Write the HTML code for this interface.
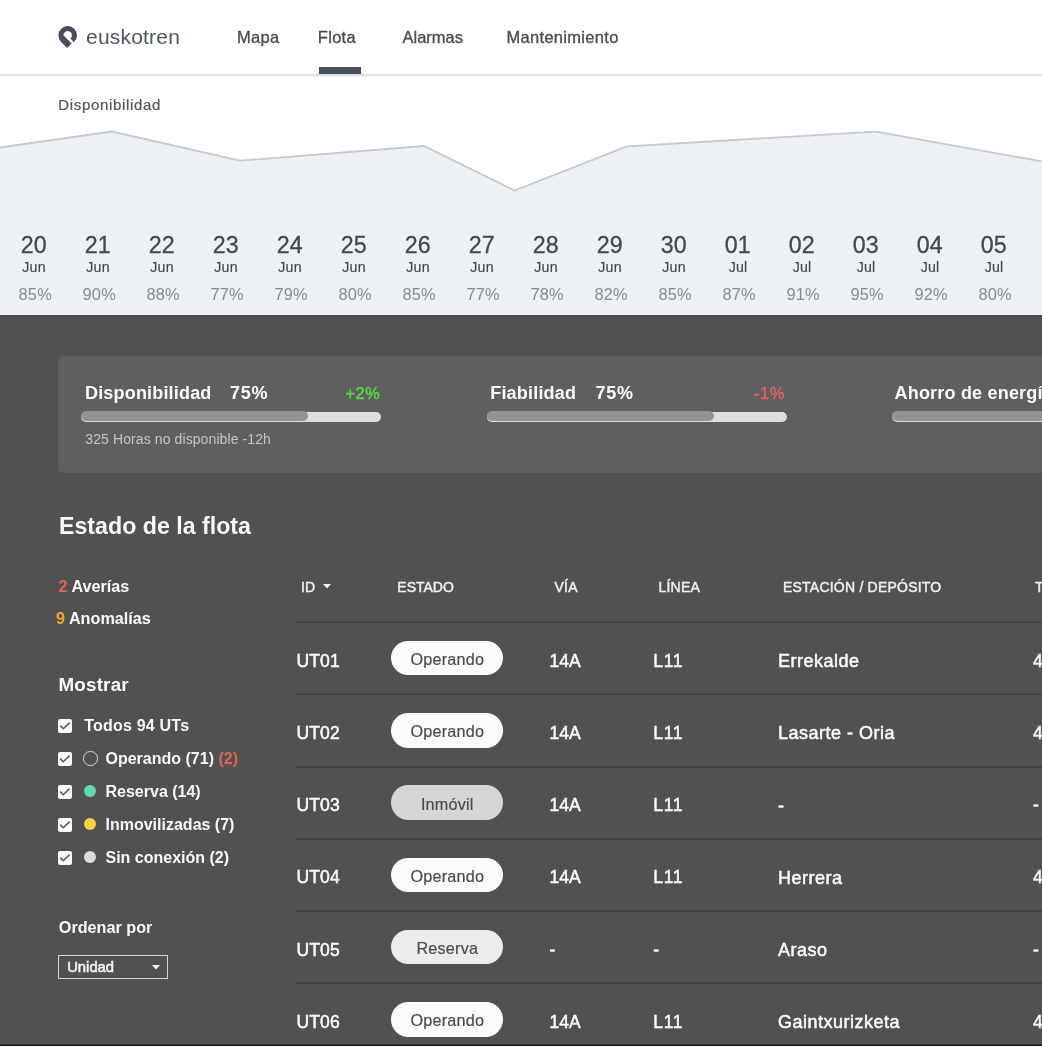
<!DOCTYPE html>
<html><head><meta charset="utf-8"><style>
html,body{margin:0;padding:0;width:1042px;height:1046px;overflow:hidden;background:#515151;}
body{position:relative;will-change:transform;font-family:"Liberation Sans",sans-serif;}
.t{position:absolute;white-space:nowrap;}
</style></head><body>
<div style="position:absolute;left:0;top:0;width:1042px;height:74px;background:#fff;"></div>
<div style="position:absolute;left:0;top:74px;width:1042px;height:3px;background:linear-gradient(#d6d8d8,#e6e8e8 55%,#fbfbfb);"></div>
<svg style="position:absolute;left:0;top:0" width="120" height="60" viewBox="0 0 120 60"><path d="M67.21 47.96 L61.12 41.88 A9.3 9.3 0 1 1 73.99 42.15 L70.44 38.61 A4.3 4.3 0 1 0 63.40 35.24 L71.66 43.50 Z" fill="#454e59"/></svg>
<div class="t" style="left:86px;top:26.20px;font-size:21px;line-height:21px;font-weight:400;color:#4d5660;letter-spacing:0.2px;">euskotren</div>

<div class="t" style="left:237px;top:28.60px;font-size:16.5px;line-height:16.5px;font-weight:400;color:#4a4a4a;letter-spacing:0.3px;-webkit-text-stroke:0.3px #4a4a4a;">Mapa</div>

<div class="t" style="left:317.8px;top:28.60px;font-size:16.5px;line-height:16.5px;font-weight:400;color:#4a4a4a;letter-spacing:0.3px;-webkit-text-stroke:0.3px #4a4a4a;">Flota</div>

<div class="t" style="left:402.5px;top:28.60px;font-size:16.5px;line-height:16.5px;font-weight:400;color:#4a4a4a;-webkit-text-stroke:0.3px #4a4a4a;">Alarmas</div>

<div class="t" style="left:506.5px;top:28.60px;font-size:16.5px;line-height:16.5px;font-weight:400;color:#4a4a4a;letter-spacing:0.3px;-webkit-text-stroke:0.3px #4a4a4a;">Mantenimiento</div>

<div style="position:absolute;left:319px;top:67px;width:42px;height:7px;background:#454e59;"></div>
<div style="position:absolute;left:0;top:77px;width:1042px;height:238px;background:#fff;"></div>
<svg style="position:absolute;left:0;top:0" width="1042" height="316" viewBox="0 0 1042 316">
<polygon points="0,147.5 112,131.5 240,160.7 424,146 514.5,190.5 627,146.3 876,131.7 1042,161.4 1042,316 0,316" fill="#ecf1f3"/>
<polyline points="0,147.5 112,131.5 240,160.7 424,146 514.5,190.5 627,146.3 876,131.7 1042,161.4" fill="none" stroke="#c6cacb" stroke-width="1.8"/>
</svg>
<div class="t" style="left:58.3px;top:97.00px;font-size:15px;line-height:15px;font-weight:400;color:#555555;letter-spacing:0.66px;-webkit-text-stroke:0.2px #555555;">Disponibilidad</div>

<div class="t" style="left:-66.19999999999999px;width:200px;text-align:center;top:234.10px;font-size:23.2px;line-height:23.2px;font-weight:400;color:#45484c;letter-spacing:0.15px;-webkit-text-stroke:0.3px #45484c;">20</div>

<div class="t" style="left:-66.0px;width:200px;text-align:center;top:259.70px;font-size:14.2px;line-height:14.2px;font-weight:400;color:#45484c;letter-spacing:0.2px;-webkit-text-stroke:0.15px #45484c;">Jun</div>

<div class="t" style="left:-64.8px;width:200px;text-align:center;top:285.60px;font-size:16.4px;line-height:16.4px;font-weight:400;color:#888a8c;letter-spacing:0.2px;">85%</div>

<div class="t" style="left:-2.200000000000003px;width:200px;text-align:center;top:234.10px;font-size:23.2px;line-height:23.2px;font-weight:400;color:#45484c;letter-spacing:0.15px;-webkit-text-stroke:0.3px #45484c;">21</div>

<div class="t" style="left:-2.0px;width:200px;text-align:center;top:259.70px;font-size:14.2px;line-height:14.2px;font-weight:400;color:#45484c;letter-spacing:0.2px;-webkit-text-stroke:0.15px #45484c;">Jun</div>

<div class="t" style="left:-0.7999999999999972px;width:200px;text-align:center;top:285.60px;font-size:16.4px;line-height:16.4px;font-weight:400;color:#888a8c;letter-spacing:0.2px;">90%</div>

<div class="t" style="left:61.79999999999998px;width:200px;text-align:center;top:234.10px;font-size:23.2px;line-height:23.2px;font-weight:400;color:#45484c;letter-spacing:0.15px;-webkit-text-stroke:0.3px #45484c;">22</div>

<div class="t" style="left:62.0px;width:200px;text-align:center;top:259.70px;font-size:14.2px;line-height:14.2px;font-weight:400;color:#45484c;letter-spacing:0.2px;-webkit-text-stroke:0.15px #45484c;">Jun</div>

<div class="t" style="left:63.19999999999999px;width:200px;text-align:center;top:285.60px;font-size:16.4px;line-height:16.4px;font-weight:400;color:#888a8c;letter-spacing:0.2px;">88%</div>

<div class="t" style="left:125.79999999999998px;width:200px;text-align:center;top:234.10px;font-size:23.2px;line-height:23.2px;font-weight:400;color:#45484c;letter-spacing:0.15px;-webkit-text-stroke:0.3px #45484c;">23</div>

<div class="t" style="left:126.0px;width:200px;text-align:center;top:259.70px;font-size:14.2px;line-height:14.2px;font-weight:400;color:#45484c;letter-spacing:0.2px;-webkit-text-stroke:0.15px #45484c;">Jun</div>

<div class="t" style="left:127.19999999999999px;width:200px;text-align:center;top:285.60px;font-size:16.4px;line-height:16.4px;font-weight:400;color:#888a8c;letter-spacing:0.2px;">77%</div>

<div class="t" style="left:189.8px;width:200px;text-align:center;top:234.10px;font-size:23.2px;line-height:23.2px;font-weight:400;color:#45484c;letter-spacing:0.15px;-webkit-text-stroke:0.3px #45484c;">24</div>

<div class="t" style="left:190.0px;width:200px;text-align:center;top:259.70px;font-size:14.2px;line-height:14.2px;font-weight:400;color:#45484c;letter-spacing:0.2px;-webkit-text-stroke:0.15px #45484c;">Jun</div>

<div class="t" style="left:191.2px;width:200px;text-align:center;top:285.60px;font-size:16.4px;line-height:16.4px;font-weight:400;color:#888a8c;letter-spacing:0.2px;">79%</div>

<div class="t" style="left:253.8px;width:200px;text-align:center;top:234.10px;font-size:23.2px;line-height:23.2px;font-weight:400;color:#45484c;letter-spacing:0.15px;-webkit-text-stroke:0.3px #45484c;">25</div>

<div class="t" style="left:254.0px;width:200px;text-align:center;top:259.70px;font-size:14.2px;line-height:14.2px;font-weight:400;color:#45484c;letter-spacing:0.2px;-webkit-text-stroke:0.15px #45484c;">Jun</div>

<div class="t" style="left:255.2px;width:200px;text-align:center;top:285.60px;font-size:16.4px;line-height:16.4px;font-weight:400;color:#888a8c;letter-spacing:0.2px;">80%</div>

<div class="t" style="left:317.8px;width:200px;text-align:center;top:234.10px;font-size:23.2px;line-height:23.2px;font-weight:400;color:#45484c;letter-spacing:0.15px;-webkit-text-stroke:0.3px #45484c;">26</div>

<div class="t" style="left:318.0px;width:200px;text-align:center;top:259.70px;font-size:14.2px;line-height:14.2px;font-weight:400;color:#45484c;letter-spacing:0.2px;-webkit-text-stroke:0.15px #45484c;">Jun</div>

<div class="t" style="left:319.2px;width:200px;text-align:center;top:285.60px;font-size:16.4px;line-height:16.4px;font-weight:400;color:#888a8c;letter-spacing:0.2px;">85%</div>

<div class="t" style="left:381.8px;width:200px;text-align:center;top:234.10px;font-size:23.2px;line-height:23.2px;font-weight:400;color:#45484c;letter-spacing:0.15px;-webkit-text-stroke:0.3px #45484c;">27</div>

<div class="t" style="left:382.0px;width:200px;text-align:center;top:259.70px;font-size:14.2px;line-height:14.2px;font-weight:400;color:#45484c;letter-spacing:0.2px;-webkit-text-stroke:0.15px #45484c;">Jun</div>

<div class="t" style="left:383.2px;width:200px;text-align:center;top:285.60px;font-size:16.4px;line-height:16.4px;font-weight:400;color:#888a8c;letter-spacing:0.2px;">77%</div>

<div class="t" style="left:445.80000000000007px;width:200px;text-align:center;top:234.10px;font-size:23.2px;line-height:23.2px;font-weight:400;color:#45484c;letter-spacing:0.15px;-webkit-text-stroke:0.3px #45484c;">28</div>

<div class="t" style="left:446.0px;width:200px;text-align:center;top:259.70px;font-size:14.2px;line-height:14.2px;font-weight:400;color:#45484c;letter-spacing:0.2px;-webkit-text-stroke:0.15px #45484c;">Jun</div>

<div class="t" style="left:447.20000000000005px;width:200px;text-align:center;top:285.60px;font-size:16.4px;line-height:16.4px;font-weight:400;color:#888a8c;letter-spacing:0.2px;">78%</div>

<div class="t" style="left:509.80000000000007px;width:200px;text-align:center;top:234.10px;font-size:23.2px;line-height:23.2px;font-weight:400;color:#45484c;letter-spacing:0.15px;-webkit-text-stroke:0.3px #45484c;">29</div>

<div class="t" style="left:510.0px;width:200px;text-align:center;top:259.70px;font-size:14.2px;line-height:14.2px;font-weight:400;color:#45484c;letter-spacing:0.2px;-webkit-text-stroke:0.15px #45484c;">Jun</div>

<div class="t" style="left:511.20000000000005px;width:200px;text-align:center;top:285.60px;font-size:16.4px;line-height:16.4px;font-weight:400;color:#888a8c;letter-spacing:0.2px;">82%</div>

<div class="t" style="left:573.8000000000001px;width:200px;text-align:center;top:234.10px;font-size:23.2px;line-height:23.2px;font-weight:400;color:#45484c;letter-spacing:0.15px;-webkit-text-stroke:0.3px #45484c;">30</div>

<div class="t" style="left:574.0px;width:200px;text-align:center;top:259.70px;font-size:14.2px;line-height:14.2px;font-weight:400;color:#45484c;letter-spacing:0.2px;-webkit-text-stroke:0.15px #45484c;">Jun</div>

<div class="t" style="left:575.2px;width:200px;text-align:center;top:285.60px;font-size:16.4px;line-height:16.4px;font-weight:400;color:#888a8c;letter-spacing:0.2px;">85%</div>

<div class="t" style="left:637.8000000000001px;width:200px;text-align:center;top:234.10px;font-size:23.2px;line-height:23.2px;font-weight:400;color:#45484c;letter-spacing:0.15px;-webkit-text-stroke:0.3px #45484c;">01</div>

<div class="t" style="left:638.0px;width:200px;text-align:center;top:259.70px;font-size:14.2px;line-height:14.2px;font-weight:400;color:#45484c;letter-spacing:0.2px;-webkit-text-stroke:0.15px #45484c;">Jul</div>

<div class="t" style="left:639.2px;width:200px;text-align:center;top:285.60px;font-size:16.4px;line-height:16.4px;font-weight:400;color:#888a8c;letter-spacing:0.2px;">87%</div>

<div class="t" style="left:701.8000000000001px;width:200px;text-align:center;top:234.10px;font-size:23.2px;line-height:23.2px;font-weight:400;color:#45484c;letter-spacing:0.15px;-webkit-text-stroke:0.3px #45484c;">02</div>

<div class="t" style="left:702.0px;width:200px;text-align:center;top:259.70px;font-size:14.2px;line-height:14.2px;font-weight:400;color:#45484c;letter-spacing:0.2px;-webkit-text-stroke:0.15px #45484c;">Jul</div>

<div class="t" style="left:703.2px;width:200px;text-align:center;top:285.60px;font-size:16.4px;line-height:16.4px;font-weight:400;color:#888a8c;letter-spacing:0.2px;">91%</div>

<div class="t" style="left:765.8000000000001px;width:200px;text-align:center;top:234.10px;font-size:23.2px;line-height:23.2px;font-weight:400;color:#45484c;letter-spacing:0.15px;-webkit-text-stroke:0.3px #45484c;">03</div>

<div class="t" style="left:766.0px;width:200px;text-align:center;top:259.70px;font-size:14.2px;line-height:14.2px;font-weight:400;color:#45484c;letter-spacing:0.2px;-webkit-text-stroke:0.15px #45484c;">Jul</div>

<div class="t" style="left:767.2px;width:200px;text-align:center;top:285.60px;font-size:16.4px;line-height:16.4px;font-weight:400;color:#888a8c;letter-spacing:0.2px;">95%</div>

<div class="t" style="left:829.8000000000001px;width:200px;text-align:center;top:234.10px;font-size:23.2px;line-height:23.2px;font-weight:400;color:#45484c;letter-spacing:0.15px;-webkit-text-stroke:0.3px #45484c;">04</div>

<div class="t" style="left:830.0px;width:200px;text-align:center;top:259.70px;font-size:14.2px;line-height:14.2px;font-weight:400;color:#45484c;letter-spacing:0.2px;-webkit-text-stroke:0.15px #45484c;">Jul</div>

<div class="t" style="left:831.2px;width:200px;text-align:center;top:285.60px;font-size:16.4px;line-height:16.4px;font-weight:400;color:#888a8c;letter-spacing:0.2px;">92%</div>

<div class="t" style="left:893.8000000000001px;width:200px;text-align:center;top:234.10px;font-size:23.2px;line-height:23.2px;font-weight:400;color:#45484c;letter-spacing:0.15px;-webkit-text-stroke:0.3px #45484c;">05</div>

<div class="t" style="left:894.0px;width:200px;text-align:center;top:259.70px;font-size:14.2px;line-height:14.2px;font-weight:400;color:#45484c;letter-spacing:0.2px;-webkit-text-stroke:0.15px #45484c;">Jul</div>

<div class="t" style="left:895.2px;width:200px;text-align:center;top:285.60px;font-size:16.4px;line-height:16.4px;font-weight:400;color:#888a8c;letter-spacing:0.2px;">80%</div>

<div style="position:absolute;left:0;top:315px;width:1042px;height:731px;background:#515151;"></div>
<div style="position:absolute;left:0;top:315px;width:1042px;height:2px;background:#4a4a4b;"></div>
<div style="position:absolute;left:58px;top:355.7px;width:1100px;height:116.9px;background:#5f5f5f;border-radius:5px;"></div>
<div class="t" style="left:85px;top:384.00px;font-size:18px;line-height:18px;font-weight:700;color:#fafafa;letter-spacing:0.18px;">Disponibilidad</div>

<div class="t" style="left:230px;top:384.00px;font-size:18px;line-height:18px;font-weight:700;color:#fafafa;letter-spacing:0.8px;">75%</div>

<div class="t" style="left:80.30000000000001px;width:300px;text-align:right;top:385.20px;font-size:16.3px;line-height:16.3px;font-weight:400;color:#58d844;letter-spacing:0.6px;-webkit-text-stroke:0.45px #58d844;">+2%</div>

<div style="position:absolute;left:81px;top:412px;width:300px;height:10px;border-radius:5px;background:#dedede;"></div>
<div style="position:absolute;left:81px;top:411px;width:227px;height:10px;border-radius:5px;background:#939393;"></div>
<div class="t" style="left:85.3px;top:432.00px;font-size:14px;line-height:14px;font-weight:400;color:#c6c6c6;letter-spacing:0.1px;">325 Horas no disponible -12h</div>

<div class="t" style="left:490.2px;top:384.00px;font-size:18px;line-height:18px;font-weight:700;color:#fafafa;letter-spacing:0.2px;">Fiabilidad</div>

<div class="t" style="left:595.5px;top:384.00px;font-size:18px;line-height:18px;font-weight:700;color:#fafafa;letter-spacing:0.8px;">75%</div>

<div class="t" style="left:485.29999999999995px;width:300px;text-align:right;top:385.20px;font-size:16.3px;line-height:16.3px;font-weight:400;color:#ea6262;letter-spacing:0.9px;-webkit-text-stroke:0.35px #ea6262;">-1%</div>

<div style="position:absolute;left:487px;top:412px;width:300px;height:10px;border-radius:5px;background:#dedede;"></div>
<div style="position:absolute;left:487px;top:411px;width:227px;height:10px;border-radius:5px;background:#939393;"></div>
<div class="t" style="left:894.5px;top:384.00px;font-size:18px;line-height:18px;font-weight:700;color:#fafafa;letter-spacing:0.2px;">Ahorro de energía</div>

<div style="position:absolute;left:892px;top:412px;width:300px;height:10px;border-radius:5px;background:#dedede;"></div>
<div style="position:absolute;left:892px;top:411px;width:227px;height:10px;border-radius:5px;background:#939393;"></div>
<div class="t" style="left:59px;top:514.80px;font-size:23.2px;line-height:23.2px;font-weight:700;color:#fafafa;">Estado de la flota</div>

<div class="t" style="left:58.5px;top:577.70px;font-size:16.2px;line-height:16.2px;font-weight:700;color:#fafafa;"><span style="color:#e5625a">2</span> Averías</div>

<div class="t" style="left:56px;top:609.80px;font-size:16.2px;line-height:16.2px;font-weight:700;color:#fafafa;"><span style="color:#f0a830">9</span> Anomalías</div>

<div class="t" style="left:58.5px;top:676.20px;font-size:18.8px;line-height:18.8px;font-weight:700;color:#fafafa;letter-spacing:0.2px;">Mostrar</div>

<svg style="position:absolute;left:58px;top:718.8px" width="14" height="14" viewBox="0 0 14 14"><rect x="0" y="0" width="14" height="14" rx="2" fill="#fafafa"/><path d="M2.3 6.6 L5.3 9.7 L11.6 3.6" fill="none" stroke="#5a5a5a" stroke-width="1.6"/></svg>
<div class="t" style="left:84.3px;top:718.00px;font-size:16px;line-height:16px;font-weight:700;color:#f8f8f8;letter-spacing:0.2px;">Todos 94 UTs</div>

<svg style="position:absolute;left:58px;top:751.8px" width="14" height="14" viewBox="0 0 14 14"><rect x="0" y="0" width="14" height="14" rx="2" fill="#fafafa"/><path d="M2.3 6.6 L5.3 9.7 L11.6 3.6" fill="none" stroke="#5a5a5a" stroke-width="1.6"/></svg>
<div style="position:absolute;left:83px;top:751.3px;width:14.5px;height:14.5px;border-radius:50%;box-sizing:border-box;border:1.4px solid #d8d8d8;"></div>
<div class="t" style="left:105.5px;top:751.30px;font-size:16px;line-height:16px;font-weight:700;color:#f8f8f8;">Operando (71) <span style="color:#e5625a">(2)</span></div>

<svg style="position:absolute;left:58px;top:784.8px" width="14" height="14" viewBox="0 0 14 14"><rect x="0" y="0" width="14" height="14" rx="2" fill="#fafafa"/><path d="M2.3 6.6 L5.3 9.7 L11.6 3.6" fill="none" stroke="#5a5a5a" stroke-width="1.6"/></svg>
<div style="position:absolute;left:83.6px;top:784.70px;width:12.6px;height:12.6px;border-radius:50%;background:#62d8b0;"></div>
<div class="t" style="left:105.5px;top:784.30px;font-size:16px;line-height:16px;font-weight:700;color:#f8f8f8;">Reserva (14)</div>

<svg style="position:absolute;left:58px;top:817.8px" width="14" height="14" viewBox="0 0 14 14"><rect x="0" y="0" width="14" height="14" rx="2" fill="#fafafa"/><path d="M2.3 6.6 L5.3 9.7 L11.6 3.6" fill="none" stroke="#5a5a5a" stroke-width="1.6"/></svg>
<div style="position:absolute;left:83.6px;top:817.70px;width:12.6px;height:12.6px;border-radius:50%;background:#f6d345;"></div>
<div class="t" style="left:105.5px;top:817.30px;font-size:16px;line-height:16px;font-weight:700;color:#f8f8f8;">Inmovilizadas (7)</div>

<svg style="position:absolute;left:58px;top:850.8px" width="14" height="14" viewBox="0 0 14 14"><rect x="0" y="0" width="14" height="14" rx="2" fill="#fafafa"/><path d="M2.3 6.6 L5.3 9.7 L11.6 3.6" fill="none" stroke="#5a5a5a" stroke-width="1.6"/></svg>
<div style="position:absolute;left:83.6px;top:850.70px;width:12.6px;height:12.6px;border-radius:50%;background:#dcdcdc;"></div>
<div class="t" style="left:105.5px;top:850.30px;font-size:16px;line-height:16px;font-weight:700;color:#f8f8f8;">Sin conexión (2)</div>

<div class="t" style="left:58.8px;top:918.60px;font-size:16.2px;line-height:16.2px;font-weight:700;color:#f8f8f8;">Ordenar por</div>

<div style="position:absolute;left:58px;top:955px;width:110px;height:23.6px;box-sizing:border-box;border:1.6px solid #d6d6d6;"></div>
<div class="t" style="left:67.2px;top:960.00px;font-size:14.8px;line-height:14.8px;font-weight:400;color:#f4f4f4;-webkit-text-stroke:0.55px #f4f4f4;">Unidad</div>

<svg style="position:absolute;left:152px;top:965px" width="8" height="5" viewBox="0 0 8 5"><path d="M0 0 L8 0 L4 4.5 Z" fill="#fafafa"/></svg>
<div class="t" style="left:301px;top:579.50px;font-size:14px;line-height:14px;font-weight:400;color:#f0f0f0;-webkit-text-stroke:0.45px #f0f0f0;">ID</div>

<svg style="position:absolute;left:323px;top:584px" width="8" height="5" viewBox="0 0 8 5"><path d="M0 0 L8 0 L4 4.5 Z" fill="#f0f0f0"/></svg>
<div class="t" style="left:397.3px;top:579.50px;font-size:14px;line-height:14px;font-weight:400;color:#f0f0f0;-webkit-text-stroke:0.45px #f0f0f0;">ESTADO</div>

<div class="t" style="left:554.5px;top:579.50px;font-size:14px;line-height:14px;font-weight:400;color:#f0f0f0;letter-spacing:0.2px;-webkit-text-stroke:0.45px #f0f0f0;">VÍA</div>

<div class="t" style="left:658.5px;top:579.50px;font-size:14px;line-height:14px;font-weight:400;color:#f0f0f0;letter-spacing:0.2px;-webkit-text-stroke:0.45px #f0f0f0;">LÍNEA</div>

<div class="t" style="left:783px;top:579.50px;font-size:14px;line-height:14px;font-weight:400;color:#f0f0f0;letter-spacing:0.22px;-webkit-text-stroke:0.45px #f0f0f0;">ESTACIÓN / DEPÓSITO</div>

<div class="t" style="left:1035px;top:579.50px;font-size:14px;line-height:14px;font-weight:400;color:#f0f0f0;-webkit-text-stroke:0.45px #f0f0f0;">T</div>

<div style="position:absolute;left:296px;top:621px;width:800px;height:2px;background:#434343;"></div>
<div style="position:absolute;left:296px;top:693px;width:800px;height:2px;background:#434343;"></div>
<div style="position:absolute;left:296px;top:766px;width:800px;height:2px;background:#434343;"></div>
<div style="position:absolute;left:296px;top:838px;width:800px;height:2px;background:#434343;"></div>
<div style="position:absolute;left:296px;top:910px;width:800px;height:2px;background:#434343;"></div>
<div style="position:absolute;left:296px;top:982px;width:800px;height:2px;background:#434343;"></div>
<div class="t" style="left:296.4px;top:652.70px;font-size:17.5px;line-height:17.5px;font-weight:400;color:#fafafa;letter-spacing:0.2px;-webkit-text-stroke:0.5px #fafafa;">UT01</div>

<div style="position:absolute;left:391px;top:640.80px;width:112px;height:34.5px;border-radius:17.25px;background:#fbfbfb;"></div>
<div class="t" style="left:347.3px;width:200px;text-align:center;top:651.20px;font-size:16.2px;line-height:16.2px;font-weight:400;color:#4c4c4c;letter-spacing:0.22px;-webkit-text-stroke:0.2px #4c4c4c;">Operando</div>

<div class="t" style="left:549.6px;top:652.70px;font-size:17.5px;line-height:17.5px;font-weight:400;color:#fafafa;-webkit-text-stroke:0.5px #fafafa;">14A</div>

<div class="t" style="left:653.3px;top:652.70px;font-size:17.5px;line-height:17.5px;font-weight:400;color:#fafafa;letter-spacing:0.6px;-webkit-text-stroke:0.5px #fafafa;">L11</div>

<div class="t" style="left:778px;top:652.10px;font-size:18px;line-height:18px;font-weight:400;color:#fafafa;letter-spacing:0.5px;-webkit-text-stroke:0.5px #fafafa;">Errekalde</div>

<div class="t" style="left:1033px;top:652.70px;font-size:17.5px;line-height:17.5px;font-weight:400;color:#fafafa;-webkit-text-stroke:0.5px #fafafa;">4</div>

<div class="t" style="left:296.4px;top:724.95px;font-size:17.5px;line-height:17.5px;font-weight:400;color:#fafafa;letter-spacing:0.2px;-webkit-text-stroke:0.5px #fafafa;">UT02</div>

<div style="position:absolute;left:391px;top:713.05px;width:112px;height:34.5px;border-radius:17.25px;background:#fbfbfb;"></div>
<div class="t" style="left:347.3px;width:200px;text-align:center;top:723.45px;font-size:16.2px;line-height:16.2px;font-weight:400;color:#4c4c4c;letter-spacing:0.22px;-webkit-text-stroke:0.2px #4c4c4c;">Operando</div>

<div class="t" style="left:549.6px;top:724.95px;font-size:17.5px;line-height:17.5px;font-weight:400;color:#fafafa;-webkit-text-stroke:0.5px #fafafa;">14A</div>

<div class="t" style="left:653.3px;top:724.95px;font-size:17.5px;line-height:17.5px;font-weight:400;color:#fafafa;letter-spacing:0.6px;-webkit-text-stroke:0.5px #fafafa;">L11</div>

<div class="t" style="left:778px;top:724.35px;font-size:18px;line-height:18px;font-weight:400;color:#fafafa;letter-spacing:0.5px;-webkit-text-stroke:0.5px #fafafa;">Lasarte - Oria</div>

<div class="t" style="left:1033px;top:724.95px;font-size:17.5px;line-height:17.5px;font-weight:400;color:#fafafa;-webkit-text-stroke:0.5px #fafafa;">4</div>

<div class="t" style="left:296.4px;top:797.20px;font-size:17.5px;line-height:17.5px;font-weight:400;color:#fafafa;letter-spacing:0.2px;-webkit-text-stroke:0.5px #fafafa;">UT03</div>

<div style="position:absolute;left:391px;top:785.30px;width:112px;height:34.5px;border-radius:17.25px;background:#d6d6d6;"></div>
<div class="t" style="left:347.3px;width:200px;text-align:center;top:795.70px;font-size:16.2px;line-height:16.2px;font-weight:400;color:#4c4c4c;letter-spacing:0.22px;-webkit-text-stroke:0.2px #4c4c4c;">Inmóvil</div>

<div class="t" style="left:549.6px;top:797.20px;font-size:17.5px;line-height:17.5px;font-weight:400;color:#fafafa;-webkit-text-stroke:0.5px #fafafa;">14A</div>

<div class="t" style="left:653.3px;top:797.20px;font-size:17.5px;line-height:17.5px;font-weight:400;color:#fafafa;letter-spacing:0.6px;-webkit-text-stroke:0.5px #fafafa;">L11</div>

<div class="t" style="left:778px;top:796.60px;font-size:18px;line-height:18px;font-weight:400;color:#fafafa;letter-spacing:0.5px;-webkit-text-stroke:0.5px #fafafa;">-</div>

<div class="t" style="left:1033px;top:797.20px;font-size:17.5px;line-height:17.5px;font-weight:400;color:#fafafa;-webkit-text-stroke:0.5px #fafafa;">-</div>

<div class="t" style="left:296.4px;top:869.45px;font-size:17.5px;line-height:17.5px;font-weight:400;color:#fafafa;letter-spacing:0.2px;-webkit-text-stroke:0.5px #fafafa;">UT04</div>

<div style="position:absolute;left:391px;top:857.55px;width:112px;height:34.5px;border-radius:17.25px;background:#fbfbfb;"></div>
<div class="t" style="left:347.3px;width:200px;text-align:center;top:867.95px;font-size:16.2px;line-height:16.2px;font-weight:400;color:#4c4c4c;letter-spacing:0.22px;-webkit-text-stroke:0.2px #4c4c4c;">Operando</div>

<div class="t" style="left:549.6px;top:869.45px;font-size:17.5px;line-height:17.5px;font-weight:400;color:#fafafa;-webkit-text-stroke:0.5px #fafafa;">14A</div>

<div class="t" style="left:653.3px;top:869.45px;font-size:17.5px;line-height:17.5px;font-weight:400;color:#fafafa;letter-spacing:0.6px;-webkit-text-stroke:0.5px #fafafa;">L11</div>

<div class="t" style="left:778px;top:868.85px;font-size:18px;line-height:18px;font-weight:400;color:#fafafa;letter-spacing:0.5px;-webkit-text-stroke:0.5px #fafafa;">Herrera</div>

<div class="t" style="left:1033px;top:869.45px;font-size:17.5px;line-height:17.5px;font-weight:400;color:#fafafa;-webkit-text-stroke:0.5px #fafafa;">4</div>

<div class="t" style="left:296.4px;top:941.70px;font-size:17.5px;line-height:17.5px;font-weight:400;color:#fafafa;letter-spacing:0.2px;-webkit-text-stroke:0.5px #fafafa;">UT05</div>

<div style="position:absolute;left:391px;top:929.80px;width:112px;height:34.5px;border-radius:17.25px;background:#ececec;"></div>
<div class="t" style="left:347.3px;width:200px;text-align:center;top:940.20px;font-size:16.2px;line-height:16.2px;font-weight:400;color:#4c4c4c;letter-spacing:0.22px;-webkit-text-stroke:0.2px #4c4c4c;">Reserva</div>

<div class="t" style="left:549.6px;top:941.70px;font-size:17.5px;line-height:17.5px;font-weight:400;color:#fafafa;-webkit-text-stroke:0.5px #fafafa;">-</div>

<div class="t" style="left:653.3px;top:941.70px;font-size:17.5px;line-height:17.5px;font-weight:400;color:#fafafa;letter-spacing:0.6px;-webkit-text-stroke:0.5px #fafafa;">-</div>

<div class="t" style="left:778px;top:941.10px;font-size:18px;line-height:18px;font-weight:400;color:#fafafa;letter-spacing:0.5px;-webkit-text-stroke:0.5px #fafafa;">Araso</div>

<div class="t" style="left:1033px;top:941.70px;font-size:17.5px;line-height:17.5px;font-weight:400;color:#fafafa;-webkit-text-stroke:0.5px #fafafa;">-</div>

<div class="t" style="left:296.4px;top:1013.95px;font-size:17.5px;line-height:17.5px;font-weight:400;color:#fafafa;letter-spacing:0.2px;-webkit-text-stroke:0.5px #fafafa;">UT06</div>

<div style="position:absolute;left:391px;top:1002.05px;width:112px;height:34.5px;border-radius:17.25px;background:#fbfbfb;"></div>
<div class="t" style="left:347.3px;width:200px;text-align:center;top:1012.45px;font-size:16.2px;line-height:16.2px;font-weight:400;color:#4c4c4c;letter-spacing:0.22px;-webkit-text-stroke:0.2px #4c4c4c;">Operando</div>

<div class="t" style="left:549.6px;top:1013.95px;font-size:17.5px;line-height:17.5px;font-weight:400;color:#fafafa;-webkit-text-stroke:0.5px #fafafa;">14A</div>

<div class="t" style="left:653.3px;top:1013.95px;font-size:17.5px;line-height:17.5px;font-weight:400;color:#fafafa;letter-spacing:0.6px;-webkit-text-stroke:0.5px #fafafa;">L11</div>

<div class="t" style="left:778px;top:1013.35px;font-size:18px;line-height:18px;font-weight:400;color:#fafafa;letter-spacing:0.5px;-webkit-text-stroke:0.5px #fafafa;">Gaintxurizketa</div>

<div class="t" style="left:1033px;top:1013.95px;font-size:17.5px;line-height:17.5px;font-weight:400;color:#fafafa;-webkit-text-stroke:0.5px #fafafa;">4</div>

<div style="position:absolute;left:0;top:1044px;width:1042px;height:1px;background:#3c3c3c;"></div><div style="position:absolute;left:0;top:1045px;width:1042px;height:1px;background:#0c0c0c;"></div>
</body></html>
